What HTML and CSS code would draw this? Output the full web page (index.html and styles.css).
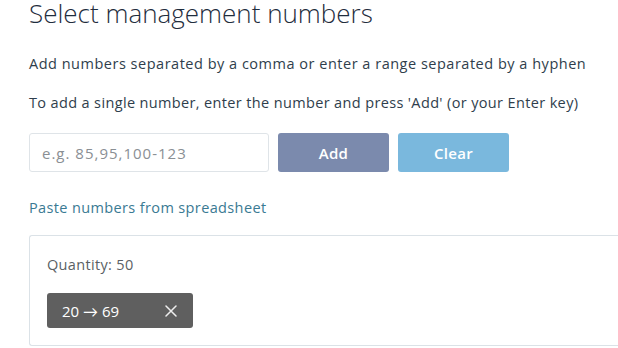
FILE: index.html
```html
<!DOCTYPE html>
<html>
<head>
<meta charset="utf-8">
<link rel="stylesheet" href="styles.css">
</head>
<body>
<main class="page">
  <h1 class="title">Select management numbers</h1>
  <p class="hint hint-first">Add numbers separated by a comma or enter a range separated by a hyphen</p>
  <p class="hint hint-second">To add a single number, enter the number and press 'Add' (or your Enter key)</p>
  <div class="entry">
    <input class="entry-input" type="text" placeholder="e.g. 85,95,100-123">
    <button class="btn btn-add">Add</button>
    <button class="btn btn-clear">Clear</button>
  </div>
  <a class="paste-link" href="#">Paste numbers from spreadsheet</a>
  <div class="panel-wrap">
    <section class="panel">
      <div class="quantity">Quantity: 50</div>
      <div class="chips">
        <span class="chip">
          <span class="chip-label">20 → 69</span>
          <svg class="chip-close" width="12" height="12" viewBox="0 0 12 12" aria-label="Remove"><path d="M1 1L11 11M11 1L1 11" /></svg>
        </span>
      </div>
    </section>
  </div>
</main>
</body>
</html>
```
FILE: styles.css
```css
html, body {
  margin: 0;
  padding: 0;
  background: #ffffff;
}
body {
  font-family: "Open Sans", "Lato", sans-serif;
  color: #2f3e4c;
  overflow: hidden;
  width: 618px;
  height: 348px;
}
.page {
  padding-left: 29px;
  display: flex;
  flex-direction: column;
  align-items: flex-start;
}
.title {
  margin: 0;
  font-size: 26px;
  font-weight: 300;
  line-height: 27px;
  color: #1f2d3d;
}
.hint {
  margin: 0;
  font-size: 14.5px;
  line-height: 18px;
  color: #2f3e4c;
}
.hint-first {
  margin-top: 28px;
  letter-spacing: 0.51px;
}
.hint-second {
  margin-top: 21px;
  letter-spacing: 0.36px;
}
.entry {
  margin-top: 21px;
  display: flex;
  gap: 9px;
}
.entry-input {
  box-sizing: border-box;
  width: 240px;
  height: 39px;
  border: 1px solid #dfe4e8;
  border-radius: 3px;
  padding: 0 12px;
  font-family: inherit;
  font-size: 15px;
  letter-spacing: 1px;
  color: #2f3e4c;
  outline: none;
}
.entry-input::placeholder {
  color: #8a8f94;
}
.btn {
  width: 111px;
  height: 39px;
  border: none;
  border-radius: 3px;
  color: #ffffff;
  font-family: inherit;
  font-size: 15px;
  font-weight: 600;
  letter-spacing: 0.3px;
}
.btn-add {
  background: #7b8aad;
}
.btn-clear {
  background: #7ab8dd;
}
.paste-link {
  margin-top: 27px;
  font-size: 14.5px;
  line-height: 18px;
  letter-spacing: 0.37px;
  color: #3a7a93;
  text-decoration: none;
}
.panel-wrap {
  align-self: stretch;
  margin-top: 18px;
}
.panel {
  box-sizing: border-box;
  height: 111px;
  border: 1px solid #dbe2e7;
  border-right: none;
  border-radius: 3px 0 0 3px;
  padding: 20px 0 0 17px;
}
.quantity {
  font-size: 14.5px;
  line-height: 18px;
  letter-spacing: 0.33px;
  color: #5a5f64;
}
.chips {
  margin-top: 19px;
  display: flex;
}
.chip {
  display: inline-flex;
  align-items: center;
  justify-content: space-between;
  box-sizing: border-box;
  width: 146px;
  height: 35px;
  padding: 0 16px 0 15px;
  background: #5f5f5f;
  border-radius: 3px;
  color: #ffffff;
  font-size: 15px;
}
.chip-close {
  display: block;
  fill: none;
  stroke: #eeeeee;
  stroke-width: 1.5;
  stroke-linecap: round;
}
```
